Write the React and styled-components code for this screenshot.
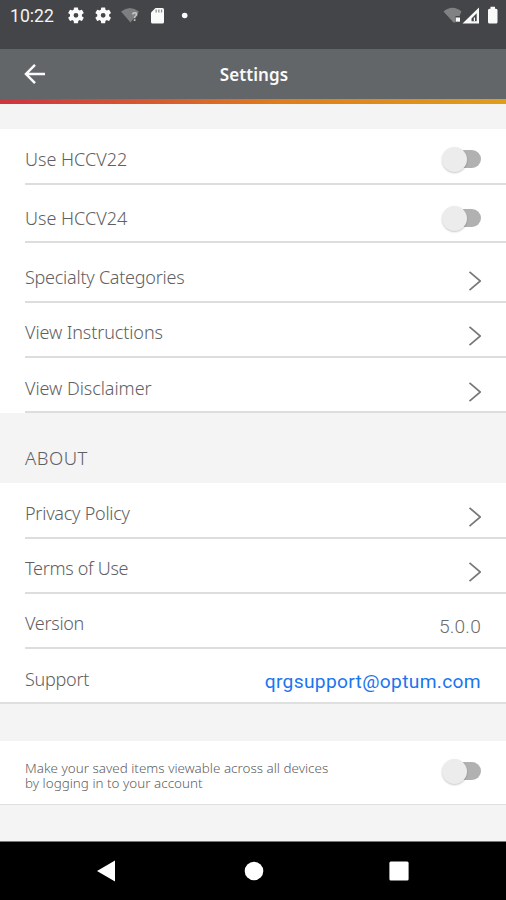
import React from "react";
import styled, { createGlobalStyle } from "styled-components";

const Global = createGlobalStyle`
  * { box-sizing: border-box; }
  body { margin: 0; background: #f4f4f4; }
`;

const Screen = styled.div`
  width: 506px;
  height: 900px;
  display: flex;
  flex-direction: column;
  overflow: hidden;
  background: #f4f4f4;
  color: #606062;
  font-family: "Noto Sans", sans-serif;
`;

const StatusBar = styled.div`
  height: 49px;
  flex: none;
  display: flex;
  align-items: flex-start;
  justify-content: space-between;
  background: #444548;
`;

const Clock = styled.span`
  width: 55px;
  padding: 6px 0 0 10px;
  font: 400 17.6px/20px Roboto, sans-serif;
  color: #f4f4f4;
  white-space: nowrap;
`;

const StatusGroup = styled.div`
  display: flex;
`;

const Header = styled.header`
  height: 50px;
  flex: none;
  display: grid;
  grid-template-columns: 60px 1fr 60px;
  align-items: center;
  background: #636669;
`;

const BackButton = styled.button`
  display: flex;
  margin: 0 0 0 24px;
  padding: 0;
  border: 0;
  background: none;
`;

const Title = styled.h1`
  margin: 0;
  padding: 1px 0 0 2px;
  text-align: center;
  color: #fafafa;
  font-size: 17px;
  font-weight: 600;
  line-height: 24px;
  letter-spacing: 0.1px;
`;

const Stripe = styled.div`
  height: 5px;
  flex: none;
  background: linear-gradient(90deg, #cf3340 0%, #d8602b 35%, #df7c1c 55%, #e09d1c 100%);
`;

const Gap = styled.div`
  height: ${(p) => p.$h}px;
  flex: none;
`;

const Panel = styled.section`
  flex: none;
  background: #fff;
  border-bottom: ${(p) => (p.$edge ? `${p.$edge}px solid #dfdfdf` : "0")};
`;

const Row = styled.div`
  height: ${(p) => p.$h}px;
  margin-left: 25px;
  padding-right: 25px;
  display: flex;
  justify-content: space-between;
  align-items: flex-start;
  border-bottom: ${(p) => (p.$last ? "0" : "2px solid #dddddd")};
`;

const Label = styled.span`
  padding-top: ${(p) => p.$top}px;
  font-size: 18px;
  font-weight: 300;
  line-height: 20px;
  letter-spacing: ${(p) => p.$ls || 0}px;
  white-space: nowrap;
`;

const SectionTitle = styled.h2`
  height: 70px;
  flex: none;
  margin: 0;
  padding: 35px 0 0 25px;
  font-size: 18.5px;
  font-weight: 350;
  line-height: 20px;
  letter-spacing: 0.5px;
`;

const End = styled.div`
  display: flex;
  padding-top: ${(p) => p.$top}px;
`;

const Value = styled.span`
  font: 400 19.2px/22px Roboto, sans-serif;
  font-weight: ${(p) => (p.$link ? 400 : 350)};
  color: ${(p) => (p.$link ? "#1b75f0" : "#6c6c6c")};
  letter-spacing: ${(p) => (p.$link ? 0.33 : 0.2)}px;
  white-space: nowrap;
`;

const Note = styled.p`
  margin: 0;
  padding-top: 20px;
  font-size: 13.4px;
  font-weight: 300;
  line-height: 15px;
  white-space: nowrap;
  letter-spacing: 0.02px;
`;

const Track = styled.span`
  width: 39px;
  height: 26px;
  display: flex;
  align-items: center;

  &::after {
    content: "";
    width: 18px;
    height: 18px;
    margin-left: -4px;
    border-radius: 0 9px 9px 0;
    background: #b1b1b1;
  }
`;

const Thumb = styled.span`
  width: 25px;
  height: 25px;
  flex: none;
  z-index: 1;
  border-radius: 50%;
  background: #ececec;
  box-shadow: 0 1px 2px rgba(0, 0, 0, 0.22);
`;

const NavBar = styled.nav`
  height: 59px;
  flex: none;
  margin-top: auto;
  display: grid;
  grid-template-columns: 212px 83px 208px;
  align-items: center;
  justify-items: center;
  border-top: 1px solid #777;
  background: #000;
`;

const Toggle = () => (
  <Track role="switch" aria-checked="false">
    <Thumb />
  </Track>
);

const Chevron = () => (
  <svg width="13" height="22" viewBox="0 0 13 22" fill="none" stroke="#777" strokeWidth="1.7">
    <path d="M1.5 1.800 12.300 11 1.500 20.200" />
  </svg>
);

const GEAR =
  "M19.14 12.94c.04-.3.06-.61.06-.94s-.02-.64-.07-.94l2.03-1.58a.49.49 0 0 0 .12-.61l-1.92-3.32a.49.49 0 0 0-.59-.22l-2.39.96c-.5-.38-1.03-.7-1.62-.94l-.36-2.54a.48.48 0 0 0-.48-.41h-3.84a.48.48 0 0 0-.47.41l-.36 2.54c-.59.24-1.13.57-1.62.94l-2.39-.96a.48.48 0 0 0-.59.22L2.74 8.87a.48.48 0 0 0 .12.61l2.03 1.58c-.05.3-.09.63-.09.94s.02.64.07.94l-2.03 1.58a.49.49 0 0 0-.12.61l1.92 3.32c.12.22.37.29.59.22l2.39-.96c.5.38 1.03.7 1.62.94l.36 2.54c.05.24.24.41.48.41h3.84c.24 0 .44-.17.47-.41l.36-2.54c.59-.24 1.13-.56 1.62-.94l2.39.96c.22.08.47 0 .59-.22l1.92-3.32a.48.48 0 0 0-.12-.61zM12 14.9a2.9 2.9 0 1 1 0-5.8 2.9 2.9 0 0 1 0 5.8z";

const NotificationIcons = () => (
  <svg width="140" height="32" viewBox="55 0 140 32" fill="#fafafa">
    <path d={GEAR} transform="translate(66 5.4) scale(.83)" />
    <path d={GEAR} transform="translate(93.2 5.4) scale(.83)" />
    <path d="M121 11.500Q130 4.500 139 11.500L130.500 22.500Z" fill="#7d7e80" />
    <text x="131.800" y="21" fontFamily="Roboto, sans-serif" fontWeight="700" fontSize="12" fill="#c4c4c5">?</text>
    <path d="M155.500 8h7q1.500 0 1.500 1.500v12.500q0 1.500-1.500 1.500h-10q-1.500 0-1.500-1.500V12.500z" />
    <path d="M155.500 9.500h1.300v3h-1.300zM158.200 9.500h1.300v3h-1.300zM160.900 9.500h1.300v3h-1.300z" fill="#8c8d8f" />
    <circle cx="184.700" cy="15.500" r="2.800" />
  </svg>
);

const SystemIcons = () => (
  <svg width="66" height="32" viewBox="440 0 66 32" fill="#fafafa">
    <path d="M443.500 11.500Q452.500 4 461.500 11.500L459.500 16h-4v6.500h-2Z" fill="#808183" />
    <path d="M455.800 17.500h4.200v4.200h-4.200z" />
    <path fillRule="evenodd" d="M479 7.500V23.500H462.500ZM476.700 13.300 471.500 18.500v2.800h5.200z" />
    <path d="M473.800 17.500h1.200v3.800h-1.200z" fill="#fafafa" />
    <path d="M490.500 6.800h4.500v2h1q1.500 0 1.500 1.500v11.700q0 1.500-1.500 1.500h-6.500q-1.500 0-1.500-1.500V10.300q0-1.500 1.500-1.500h1z" />
  </svg>
);

export default function App() {
  return (
    <>
      <Global />
      <Screen>
        <StatusBar>
          <StatusGroup>
            <Clock>10:22</Clock>
            <NotificationIcons />
          </StatusGroup>
          <SystemIcons />
        </StatusBar>
        <Header>
          <BackButton aria-label="Back">
            <svg width="22" height="22" viewBox="0 0 22 22" fill="none" stroke="#fafafa" strokeWidth="2.5">
              <path d="M21 11H3M11 1.800 2 11l9 9.200" />
            </svg>
          </BackButton>
          <Title>Settings</Title>
        </Header>
        <Stripe />
        <Gap $h={25} />
        <Panel>
          <Row $h={56}>
            <Label $top={20}>Use HCCV22</Label>
            <End $top={17}><Toggle /></End>
          </Row>
          <Row $h={58}>
            <Label $top={23}>Use HCCV24</Label>
            <End $top={20}><Toggle /></End>
          </Row>
          <Row $h={60}>
            <Label $top={24} $ls={-0.25}>Specialty Categories</Label>
            <End $top={27}><Chevron /></End>
          </Row>
          <Row $h={55}>
            <Label $top={19} $ls={-0.1}>View Instructions</Label>
            <End $top={22}><Chevron /></End>
          </Row>
          <Row $h={55}>
            <Label $top={20} $ls={-0.05}>View Disclaimer</Label>
            <End $top={23}><Chevron /></End>
          </Row>
        </Panel>
        <SectionTitle>ABOUT</SectionTitle>
        <Panel $edge={2}>
          <Row $h={56}>
            <Label $top={20} $ls={-0.25}>Privacy Policy</Label>
            <End $top={23}><Chevron /></End>
          </Row>
          <Row $h={55}>
            <Label $top={19} $ls={-0.3}>Terms of Use</Label>
            <End $top={22}><Chevron /></End>
          </Row>
          <Row $h={55}>
            <Label $top={19} $ls={-0.3}>Version</Label>
            <End $top={22}><Value>5.0.0</Value></End>
          </Row>
          <Row $h={53} $last>
            <Label $top={20} $ls={-0.25}>Support</Label>
            <End $top={22}><Value $link>qrgsupport@optum.com</Value></End>
          </Row>
        </Panel>
        <Gap $h={37} />
        <Panel $edge={1}>
          <Row $h={63} $last>
            <Note>
              Make your saved items viewable across all devices
              <br />
              by logging in to your account
            </Note>
            <End $top={17}><Toggle /></End>
          </Row>
        </Panel>
        <NavBar>
          <svg width="20" height="22" viewBox="0 0 20 22" fill="#fff">
            <path d="M1 11 19 .5v21z" />
          </svg>
          <svg width="20" height="20" viewBox="0 0 20 20" fill="#fff">
            <circle cx="10" cy="10" r="9.300" />
          </svg>
          <svg width="20" height="20" viewBox="0 0 20 20" fill="#fff">
            <rect x=".4" y=".4" width="19.200" height="19.200" rx="1.500" />
          </svg>
        </NavBar>
      </Screen>
    </>
  );
}
